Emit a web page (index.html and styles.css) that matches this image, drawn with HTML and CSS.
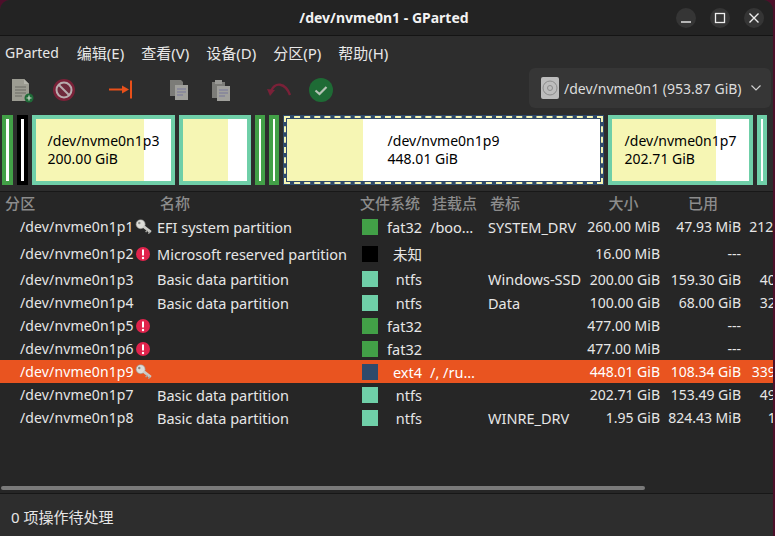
FILE: index.html
```html
<!DOCTYPE html>
<html lang="zh">
<head>
  <meta charset="utf-8">
  <title>/dev/nvme0n1 - GParted</title>
  <link rel="stylesheet" href="styles.css">
</head>
<body>
  <div class="window">
    <header class="titlebar">
      <div class="title">/dev/nvme0n1 - GParted</div>
      <div class="win-buttons">
        <span class="win-btn"><svg width="20" height="20" viewBox="0 0 20 20"><path d="M5 14h10" stroke="#eee" stroke-width="1.4"/></svg></span>
        <span class="win-btn"><svg width="20" height="20" viewBox="0 0 20 20"><rect x="5.5" y="5.5" width="9" height="9" fill="none" stroke="#eee" stroke-width="1.3"/></svg></span>
        <span class="win-btn"><svg width="20" height="20" viewBox="0 0 20 20"><path d="M5.5 5.5l9 9M14.5 5.5l-9 9" stroke="#eee" stroke-width="1.4"/></svg></span>
      </div>
    </header>

    <nav class="menubar">
      <span class="app-menu">GParted</span>
      <span>编辑(E)</span>
      <span>查看(V)</span>
      <span>设备(D)</span>
      <span>分区(P)</span>
      <span>帮助(H)</span>
    </nav>

    <div class="toolbar">
      <div class="tools">
        <span class="tool">
          <svg width="26" height="26" viewBox="0 0 26 26">
            <path d="M4 2h12l5 5v17H4z" fill="#9c9c92"/>
            <path d="M16 2v5h5z" fill="#b5b5ac"/>
            <path d="M7 10h11M7 13h11M7 16h11M7 19h7" stroke="#6a6a64" stroke-width="1"/>
            <circle cx="21" cy="21" r="4.5" fill="#1f6b38"/>
            <path d="M18.500 21h5M21 18.500v5" stroke="#cfe0d0" stroke-width="1.2"/>
          </svg>
        </span>
        <span class="tool">
          <svg width="26" height="26" viewBox="0 0 26 26">
            <circle cx="13" cy="13" r="11" fill="#7a2138"/>
            <circle cx="13" cy="13" r="7.500" fill="#6e2a3c" stroke="#b8acae" stroke-width="2"/>
            <path d="M8 8l10 10" stroke="#b8acae" stroke-width="2"/>
          </svg>
        </span>
        <span class="tool-sep"></span>
        <span class="tool">
          <svg width="26" height="26" viewBox="0 0 26 26">
            <path d="M1 12.500h15" stroke="#e8501a" stroke-width="2"/>
            <path d="M14 8.500l7 4-7 4z" fill="#e8501a"/>
            <path d="M23 3.500v18" stroke="#e8501a" stroke-width="2"/>
          </svg>
        </span>
        <span class="tool-sep"></span>
        <span class="tool">
          <svg width="26" height="26" viewBox="0 0 26 26">
            <path d="M4 3h11l2 2v14H4z" fill="#7c7c78"/>
            <path d="M9 8h13v15H9z" fill="#a0a09c"/>
            <path d="M11 12h9M11 15h9M11 18h6" stroke="#77779a" stroke-width="1"/>
          </svg>
        </span>
        <span class="tool">
          <svg width="26" height="26" viewBox="0 0 26 26">
            <path d="M4 5h13v16H4z" fill="#7c7c78"/>
            <path d="M7 3h7v4H7z" fill="#9a9a96"/>
            <path d="M9 9h13v15H9z" fill="#a0a09c"/>
            <path d="M11 13h9M11 16h9M11 19h6" stroke="#77779a" stroke-width="1"/>
          </svg>
        </span>
        <span class="tool-sep"></span>
        <span class="tool">
          <svg width="26" height="26" viewBox="0 0 26 26">
            <path d="M5 14C9 5 19 5 24 18" fill="none" stroke="#7a2138" stroke-width="2.400"/>
            <path d="M1 12l8 1-5 6z" fill="#7a2138"/>
          </svg>
        </span>
        <span class="tool">
          <svg width="26" height="26" viewBox="0 0 26 26">
            <circle cx="13" cy="13" r="12" fill="#1e6b35"/>
            <path d="M7.500 13.500l4 3.500 7-7" fill="none" stroke="#b4c2b4" stroke-width="2.200"/>
          </svg>
        </span>
      </div>
      <div class="device-combo">
        <svg class="disk" width="18" height="22" viewBox="0 0 18 22">
          <rect width="18" height="22" rx="2" fill="#bdbdbd"/>
          <circle cx="9" cy="11" r="7" fill="none" stroke="#8c8c8c" stroke-width="1"/>
          <circle cx="9" cy="11" r="2.500" fill="none" stroke="#8c8c8c" stroke-width="1"/>
        </svg>
        <span class="device-name">/dev/nvme0n1 (953.87 GiB)</span>
        <svg width="12" height="8" viewBox="0 0 12 8"><path d="M1.500 1.500L6 6l4.500-4.500" fill="none" stroke="#cfcfcf" stroke-width="1.200"/></svg>
      </div>
    </div>

    <div class="disk-graph">
      <div class="part fat w11"><div class="inner"></div></div>
      <div class="part unknown w11"><div class="inner"></div></div>
      <div class="part ntfs w143"><div class="inner" style="--used:108px"><div class="part-label">/dev/nvme0n1p3<br>200.00 GiB</div></div></div>
      <div class="part ntfs w72"><div class="inner" style="--used:45px"></div></div>
      <div class="part fat w10"><div class="inner"></div></div>
      <div class="part fat w10"><div class="inner"></div></div>
      <div class="part ext4 w321"><div class="inner" style="--used:76px"><div class="part-label">/dev/nvme0n1p9<br>448.01 GiB</div></div></div>
      <div class="part ntfs w145"><div class="inner" style="--used:104px"><div class="part-label">/dev/nvme0n1p7<br>202.71 GiB</div></div></div>
      <div class="part ntfs w10"><div class="inner"></div></div>
    </div>

    <div class="tree">
      <div class="tree-rows">
        <div class="row head">
          <span class="c-part">分区</span>
          <span class="c-name">名称</span>
          <span class="c-fs">文件系统</span>
          <span class="c-mount">挂载点</span>
          <span class="c-label">卷标</span>
          <span class="c-size">大小</span>
          <span class="c-used">已用</span>
          <span class="c-free"></span>
        </div>

        <div class="row tall">
          <span class="c-part">/dev/nvme0n1p1<svg class="badge" width="18" height="16" viewBox="0 0 16 14"><use href="#key"/></svg></span>
          <span class="c-name">EFI system partition</span>
          <span class="c-fs"><i class="swatch sw-fat"></i>fat32</span>
          <span class="c-mount">/boo…</span>
          <span class="c-label">SYSTEM_DRV</span>
          <span class="c-size">260.00 MiB</span>
          <span class="c-used">47.93 MiB</span>
          <span class="c-free">212.07 MiB</span>
        </div>
        <div class="row tall">
          <span class="c-part">/dev/nvme0n1p2<svg class="badge" width="16" height="16" viewBox="0 0 16 16"><use href="#warn"/></svg></span>
          <span class="c-name">Microsoft reserved partition</span>
          <span class="c-fs"><i class="swatch sw-unknown"></i>未知</span>
          <span class="c-mount"></span>
          <span class="c-label"></span>
          <span class="c-size">16.00 MiB</span>
          <span class="c-used">---</span>
          <span class="c-free"></span>
        </div>
        <div class="row first-plain">
          <span class="c-part">/dev/nvme0n1p3</span>
          <span class="c-name">Basic data partition</span>
          <span class="c-fs"><i class="swatch sw-ntfs"></i>ntfs</span>
          <span class="c-mount"></span>
          <span class="c-label">Windows-SSD</span>
          <span class="c-size">200.00 GiB</span>
          <span class="c-used">159.30 GiB</span>
          <span class="c-free">40.70 GiB</span>
        </div>
        <div class="row">
          <span class="c-part">/dev/nvme0n1p4</span>
          <span class="c-name">Basic data partition</span>
          <span class="c-fs"><i class="swatch sw-ntfs"></i>ntfs</span>
          <span class="c-mount"></span>
          <span class="c-label">Data</span>
          <span class="c-size">100.00 GiB</span>
          <span class="c-used">68.00 GiB</span>
          <span class="c-free">32.00 GiB</span>
        </div>
        <div class="row">
          <span class="c-part">/dev/nvme0n1p5<svg class="badge" width="16" height="16" viewBox="0 0 16 16"><use href="#warn"/></svg></span>
          <span class="c-name"></span>
          <span class="c-fs"><i class="swatch sw-fat"></i>fat32</span>
          <span class="c-mount"></span>
          <span class="c-label"></span>
          <span class="c-size">477.00 MiB</span>
          <span class="c-used">---</span>
          <span class="c-free"></span>
        </div>
        <div class="row">
          <span class="c-part">/dev/nvme0n1p6<svg class="badge" width="16" height="16" viewBox="0 0 16 16"><use href="#warn"/></svg></span>
          <span class="c-name"></span>
          <span class="c-fs"><i class="swatch sw-fat"></i>fat32</span>
          <span class="c-mount"></span>
          <span class="c-label"></span>
          <span class="c-size">477.00 MiB</span>
          <span class="c-used">---</span>
          <span class="c-free"></span>
        </div>
        <div class="row selected">
          <span class="c-part">/dev/nvme0n1p9<svg class="badge" width="18" height="16" viewBox="0 0 16 14"><use href="#key"/></svg></span>
          <span class="c-name"></span>
          <span class="c-fs"><i class="swatch sw-ext4"></i>ext4</span>
          <span class="c-mount">/, /ru…</span>
          <span class="c-label"></span>
          <span class="c-size">448.01 GiB</span>
          <span class="c-used">108.34 GiB</span>
          <span class="c-free">339.67 GiB</span>
        </div>
        <div class="row">
          <span class="c-part">/dev/nvme0n1p7</span>
          <span class="c-name">Basic data partition</span>
          <span class="c-fs"><i class="swatch sw-ntfs"></i>ntfs</span>
          <span class="c-mount"></span>
          <span class="c-label"></span>
          <span class="c-size">202.71 GiB</span>
          <span class="c-used">153.49 GiB</span>
          <span class="c-free">49.22 GiB</span>
        </div>
        <div class="row">
          <span class="c-part">/dev/nvme0n1p8</span>
          <span class="c-name">Basic data partition</span>
          <span class="c-fs"><i class="swatch sw-ntfs"></i>ntfs</span>
          <span class="c-mount"></span>
          <span class="c-label">WINRE_DRV</span>
          <span class="c-size">1.95 GiB</span>
          <span class="c-used">824.43 MiB</span>
          <span class="c-free">1.14 GiB</span>
        </div>
      </div>
      <div class="hscroll"><div class="hscroll-thumb"></div></div>
    </div>

    <footer class="statusbar">0 项操作待处理</footer>
  </div>

  <svg class="defs" width="0" height="0">
    <symbol id="key" viewBox="0 0 16 14">
      <circle cx="5" cy="4.500" r="4" fill="#dcdcd8" stroke="#9a9a96" stroke-width="0.600"/>
      <circle cx="3.800" cy="3.500" r="1.100" fill="#8a8a86"/>
      <path d="M7.500 6.500l6.500 5" stroke="#cacac6" stroke-width="2.600"/>
      <path d="M11 9.500l-1.500 2M13 11l-1 2" stroke="#a8a8a4" stroke-width="1.200"/>
    </symbol>
    <symbol id="warn" viewBox="0 0 16 16">
      <circle cx="8" cy="8" r="7" fill="#e0234c"/>
      <path d="M8 3.500v6" stroke="#fff" stroke-width="2"/>
      <circle cx="8" cy="12" r="1.200" fill="#fff"/>
    </symbol>
  </svg>
</body>
</html>
```

FILE: styles.css
```css
* {
  box-sizing: border-box;
}

html, body {
  height: 100%;
}

body {
  margin: 0;
  background: #4d0f2a;
  font-family: "Noto Sans", "Noto Sans CJK SC", sans-serif;
  font-size: 14px;
  color: #e6e6e6;
  overflow: hidden;
}

.defs {
  position: absolute;
}

.window {
  width: 773px;
  height: 536px;
  display: flex;
  flex-direction: column;
  background: #2d2d2d;
  border-radius: 10px 10px 0 0;
  overflow: hidden;
}

.titlebar {
  flex: none;
  height: 36px;
  display: flex;
  align-items: center;
  justify-content: center;
  position: relative;
  background: #232323;
  border-bottom: 1px solid #141414;
}

.title {
  font-weight: 700;
  font-size: 14px;
  color: #f2f2f2;
  margin-left: -5px;
}

.win-buttons {
  position: absolute;
  right: 9px;
  top: 8px;
  display: flex;
  gap: 14px;
}

.win-btn {
  width: 20px;
  height: 20px;
  border-radius: 50%;
  background: #353535;
}

.win-btn svg {
  display: block;
}

.menubar {
  flex: none;
  height: 32px;
  display: flex;
  align-items: center;
  gap: 17px;
  padding-left: 5px;
  font-size: 15px;
  color: #e8e8e8;
}

.app-menu {
  font-size: 14px;
  margin-right: 1px;
}

.toolbar {
  flex: none;
  height: 40px;
  display: flex;
  justify-content: space-between;
  padding-right: 2px;
}

.tools {
  display: flex;
  align-items: center;
  padding-top: 4px;
}

.tool {
  width: 42.5px;
  display: flex;
  justify-content: center;
}

.tool-sep {
  width: 15px;
}

.device-combo {
  width: 242px;
  display: flex;
  align-items: center;
  padding-left: 12px;
  background: #363636;
  border-radius: 6px;
  color: #dcdcdc;
}

.device-name {
  margin-left: 5px;
  margin-right: 8px;
  white-space: nowrap;
}

.disk-graph {
  flex: none;
  height: 83px;
  display: flex;
  gap: 4px;
  padding: 7px 0 6px 2px;
}

.part {
  height: 70px;
  border: 4px solid;
}

.fat { border-color: #42a047; }
.unknown { border-color: #000; }
.ntfs { border-color: #6fcfa8; }

.ext4 {
  border-color: #2f4a6b;
  outline: 2px dashed #f6f6b4;
  outline-offset: -3px;
}

.w10 { width: 10px; }
.w11 { width: 11px; }
.w72 { width: 72px; }
.w143 { width: 143px; }
.w145 { width: 145px; }
.w321 { width: 321px; }

.inner {
  --used: 0px;
  height: 100%;
  display: flex;
  align-items: center;
  justify-content: center;
  color: #000;
  background: linear-gradient(to right, #f6f6b4 var(--used), #fff var(--used));
}

.part-label {
  line-height: 18px;
  white-space: nowrap;
}

.tree {
  flex: 1;
  min-height: 0;
  display: flex;
  flex-direction: column;
  background: #262626;
  border-top: 1px solid #181818;
  border-bottom: 1px solid #171717;
}

.tree-rows {
  flex: 1;
  min-height: 0;
  overflow: hidden;
}

.row {
  height: 23px;
  width: 822px;
  display: grid;
  grid-template-columns: 157px 203px 72px 56px 94px 78px 81px 81px;
  align-items: center;
  white-space: nowrap;
}

.row.tall { height: 27px; }
.row.first-plain { height: 24px; }

.row.head {
  height: 21px;
  color: #8c8c8c;
  font-size: 15px;
  font-weight: 500;
}

.row.selected {
  background: #e95420;
  color: #fff;
}

.c-part {
  display: flex;
  align-items: center;
  padding-left: 20px;
  letter-spacing: 0.14px;
}

.c-name, .c-label {
  font-size: 14.5px;
}

.c-mount {
  font-size: 14.5px;
  margin-left: -2px;
}

.head .c-part { padding-left: 5px; }
.head .c-name { padding-left: 3px; font-size: 15px; }
.head .c-mount { margin-left: 0; font-size: 15px; }
.head .c-label { padding-left: 2px; font-size: 15px; }
.head .c-size { padding-left: 5px; text-align: center; }
.head .c-used { padding-left: 5px; text-align: center; }

.badge {
  margin-left: 1px;
  flex: none;
}

.c-fs {
  display: flex;
  align-items: center;
  justify-content: space-between;
  padding: 0 10px 0 2px;
  font-size: 14.5px;
}

.head .c-fs {
  padding-left: 0;
  font-size: 15px;
}

.c-size, .c-used, .c-free {
  text-align: right;
}

.swatch {
  width: 16px;
  height: 16px;
}

.sw-fat { background: #42a047; }
.sw-unknown { background: #000; }
.sw-ntfs { background: #6fcfa8; }
.sw-ext4 { background: #2f4a6b; }

.hscroll {
  flex: none;
  height: 8px;
  padding: 1px 0 3px 1px;
}

.hscroll-thumb {
  width: 644px;
  height: 4px;
  border-radius: 2px;
  background: #7a7a7a;
}

.statusbar {
  flex: none;
  height: 42px;
  display: flex;
  align-items: center;
  padding: 2px 0 0 11px;
  font-size: 15px;
  color: #e6e6e6;
}
```
